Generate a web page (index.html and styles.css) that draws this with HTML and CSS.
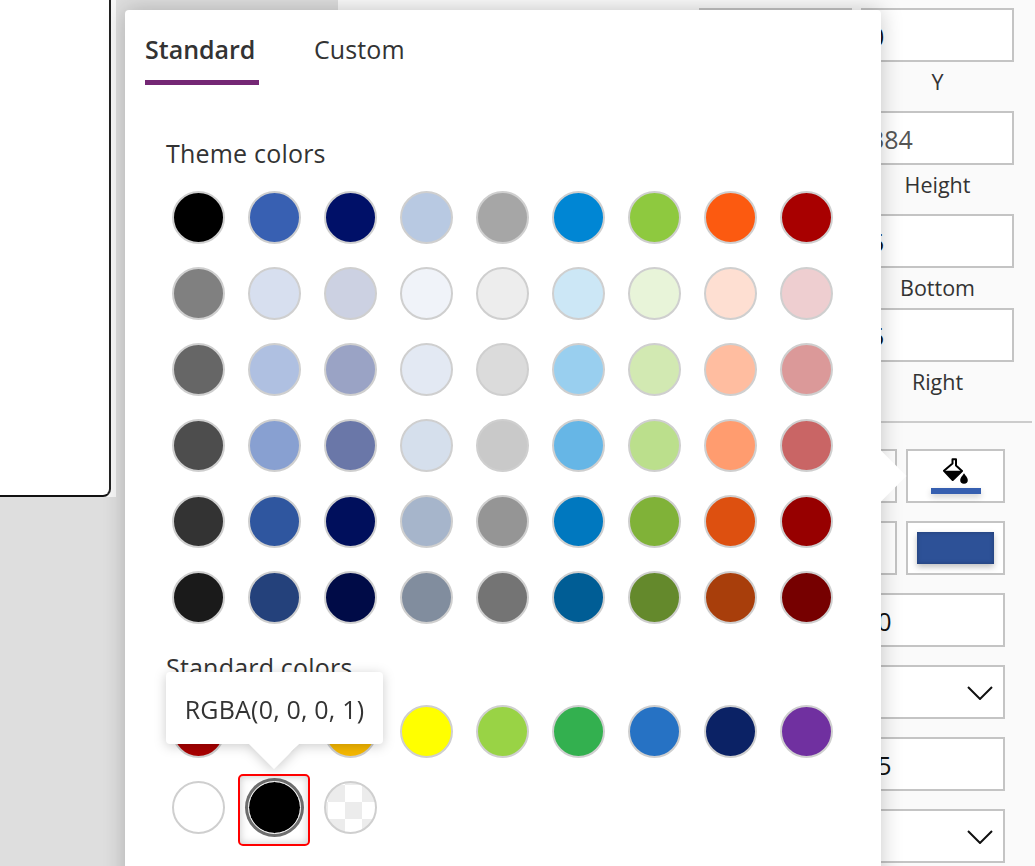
FILE: index.html
```html
<!DOCTYPE html>
<html lang="en">
<head>
    <meta charset="UTF-8">
    <meta name="viewport" content="width=device-width, initial-scale=1.0">
    <title>Color picker</title>
    <link rel="stylesheet" href="styles.css">
</head>
<body>
    <div class="canvas">
        <div class="slide-edge">
            <div class="slide"></div>
        </div>
    </div>

    <div class="pane">
        <div class="pos-row">
            <div class="prop"><div class="field">0</div><div class="prop-label">X</div></div>
            <div class="prop"><div class="field">0</div><div class="prop-label">Y</div></div>
        </div>
        <div class="pos-row">
            <div class="prop"><div class="field muted">1366</div><div class="prop-label">Width</div></div>
            <div class="prop"><div class="field muted">384</div><div class="prop-label">Height</div></div>
        </div>
        <div class="pos-row tight">
            <div class="prop"><div class="field">5</div><div class="prop-label">Top</div></div>
            <div class="prop"><div class="field">5</div><div class="prop-label">Bottom</div></div>
        </div>
        <div class="pos-row tight">
            <div class="prop"><div class="field">5</div><div class="prop-label">Left</div></div>
            <div class="prop"><div class="field">5</div><div class="prop-label">Right</div></div>
        </div>
        <div class="divider"></div>

        <div class="style-rows">
            <div class="btn-row">
                <div class="field"></div>
                <div class="field icon-btn">
                    <svg class="bucket" viewBox="0 0 26 26" width="26" height="26">
                        <path d="M9.500 1.200h3.500v6.300l6 5.500-9.300 9-8.700-9.300 8.500-7.200z" fill="#fff" stroke="#000" stroke-width="2" stroke-linejoin="round"/>
                        <path d="M1.500 12.800h18l-9.700 9.700z" fill="#000"/>
                        <path d="M21 15.300c1.800 2.700 3.800 4.700 3.800 6.700a3.800 3.800 0 0 1-7.600 0c0-2 2-4 3.800-6.700z" fill="#000"/>
                    </svg>
                    <span class="fill-bar"></span>
                </div>
            </div>
            <div class="btn-row">
                <div class="field"></div>
                <div class="field icon-btn"><span class="fill-swatch"></span></div>
            </div>
            <div class="field">10</div>
            <div class="field select">
                <svg class="chevron" viewBox="0 0 26 14" width="26" height="14"><path d="M1 1l12 12L25 1" fill="none" stroke="#111" stroke-width="2"/></svg>
            </div>
            <div class="field">15</div>
            <div class="field select">
                <svg class="chevron" viewBox="0 0 26 14" width="26" height="14"><path d="M1 1l12 12L25 1" fill="none" stroke="#111" stroke-width="2"/></svg>
            </div>
        </div>
    </div>

    <div class="popup">
        <div class="tabs">
            <div class="tab active">Standard</div>
            <div class="tab">Custom</div>
        </div>

        <div class="group-title first">Theme colors</div>
        <div class="swatches">
            <div class="swatch" style="background-color: #000000"></div>
            <div class="swatch" style="background-color: #3860b2"></div>
            <div class="swatch" style="background-color: #001068"></div>
            <div class="swatch" style="background-color: #b8c9e2"></div>
            <div class="swatch" style="background-color: #a6a6a6"></div>
            <div class="swatch" style="background-color: #0086d4"></div>
            <div class="swatch" style="background-color: #8ec93f"></div>
            <div class="swatch" style="background-color: #fc5a10"></div>
            <div class="swatch" style="background-color: #a80000"></div>

            <div class="swatch" style="background-color: #808080"></div>
            <div class="swatch" style="background-color: #d7dfef"></div>
            <div class="swatch" style="background-color: #ccd1e2"></div>
            <div class="swatch" style="background-color: #f0f3f9"></div>
            <div class="swatch" style="background-color: #ededed"></div>
            <div class="swatch" style="background-color: #cce7f6"></div>
            <div class="swatch" style="background-color: #e8f4d9"></div>
            <div class="swatch" style="background-color: #fedfd2"></div>
            <div class="swatch" style="background-color: #eeced0"></div>

            <div class="swatch" style="background-color: #666666"></div>
            <div class="swatch" style="background-color: #afc0e1"></div>
            <div class="swatch" style="background-color: #9aa3c5"></div>
            <div class="swatch" style="background-color: #e3e9f3"></div>
            <div class="swatch" style="background-color: #dbdbdb"></div>
            <div class="swatch" style="background-color: #99cfef"></div>
            <div class="swatch" style="background-color: #d2e9b2"></div>
            <div class="swatch" style="background-color: #ffbda0"></div>
            <div class="swatch" style="background-color: #db9999"></div>

            <div class="swatch" style="background-color: #4d4d4d"></div>
            <div class="swatch" style="background-color: #88a0d1"></div>
            <div class="swatch" style="background-color: #6a77a8"></div>
            <div class="swatch" style="background-color: #d5dfec"></div>
            <div class="swatch" style="background-color: #c9c9c9"></div>
            <div class="swatch" style="background-color: #66b6e6"></div>
            <div class="swatch" style="background-color: #bbdf8c"></div>
            <div class="swatch" style="background-color: #ff9c6f"></div>
            <div class="swatch" style="background-color: #c96565"></div>

            <div class="swatch" style="background-color: #333333"></div>
            <div class="swatch" style="background-color: #2f569f"></div>
            <div class="swatch" style="background-color: #000f5c"></div>
            <div class="swatch" style="background-color: #a6b5cb"></div>
            <div class="swatch" style="background-color: #959595"></div>
            <div class="swatch" style="background-color: #0078bf"></div>
            <div class="swatch" style="background-color: #80b238"></div>
            <div class="swatch" style="background-color: #dd5010"></div>
            <div class="swatch" style="background-color: #970000"></div>

            <div class="swatch" style="background-color: #1a1a1a"></div>
            <div class="swatch" style="background-color: #24417b"></div>
            <div class="swatch" style="background-color: #000b47"></div>
            <div class="swatch" style="background-color: #818d9e"></div>
            <div class="swatch" style="background-color: #747474"></div>
            <div class="swatch" style="background-color: #005d95"></div>
            <div class="swatch" style="background-color: #64892c"></div>
            <div class="swatch" style="background-color: #a83e0b"></div>
            <div class="swatch" style="background-color: #760000"></div>
        </div>

        <div class="group-title">Standard colors</div>
        <div class="swatches">
            <div class="swatch" style="background-color: #a80000"></div>
            <div class="swatch" style="background-color: #e3400c"></div>
            <div class="swatch" style="background-color: #f6b800"></div>
            <div class="swatch" style="background-color: #ffff00"></div>
            <div class="swatch" style="background-color: #99d345"></div>
            <div class="swatch" style="background-color: #33b04f"></div>
            <div class="swatch" style="background-color: #2672c4"></div>
            <div class="swatch" style="background-color: #0b2265"></div>
            <div class="swatch" style="background-color: #7030a0"></div>

            <div class="swatch" style="background-color: #ffffff"></div>
            <div class="swatch selected"></div>
            <div class="swatch checker"></div>
        </div>

        <div class="tooltip">RGBA(0, 0, 0, 1)</div>
    </div>
</body>
</html>
```

FILE: styles.css
```css
*, *::before, *::after {
    box-sizing: border-box;
}

body {
    margin: 0;
    height: 866px;
    overflow: hidden;
    display: flex;
    position: relative;
    font-family: "Open Sans", "Noto Sans", sans-serif;
    color: #333;
}

/* left side */
.canvas {
    width: 338px;
    height: 100%;
    background-color: #dedede;
}

.slide-edge {
    width: 116px;
    height: 497px;
    background-color: #f7f7f7;
}

.slide {
    width: 111px;
    height: 497px;
    background-color: #fff;
    border-right: 2px solid #222;
    border-bottom: 2px solid #111;
    border-bottom-right-radius: 8px;
}

/* right side */
.pane {
    flex: 1;
    height: 100%;
    padding-top: 8px;
    background-color: #fafafa;
}

.pos-row {
    display: grid;
    grid-template-columns: 153px 153px;
    column-gap: 9px;
    margin-left: 361px;
    margin-bottom: 9px;
}

.pos-row.tight {
    margin-bottom: 0;
}

.prop-label {
    height: 40px;
    line-height: 40px;
    text-align: center;
    font-size: 21.5px;
}

.field {
    height: 54px;
    line-height: 52px;
    padding-left: 7px;
    background-color: #fff;
    border: 2px solid #c4c4c4;
    font-size: 25px;
    color: #111;
}

.field.muted {
    color: #555;
}

.divider {
    height: 2px;
    margin: 19px 3px 26px 0;
    background-color: #ccc;
}

.style-rows {
    display: flex;
    flex-direction: column;
    gap: 18px;
    margin-left: 516px;
    width: 151px;
}

.btn-row {
    display: grid;
    grid-template-columns: 43px 99px;
    column-gap: 9px;
}

.icon-btn {
    padding: 0;
    display: flex;
    flex-direction: column;
    align-items: center;
}

.bucket {
    margin-top: 7px;
}

.fill-bar {
    width: 50px;
    height: 6px;
    margin-top: 4px;
    background-color: #365fb0;
    box-shadow: 0 3px 6px rgba(0, 0, 0, 0.2);
}

.fill-swatch {
    width: 77px;
    height: 32px;
    margin-top: 9px;
    background-color: #2d5197;
    box-shadow: 0 3px 6px rgba(0, 0, 0, 0.25), inset 0 0 4px rgba(0, 0, 0, 0.25);
}

.select {
    display: flex;
    justify-content: flex-end;
    align-items: center;
    padding-right: 10px;
}

.chevron {
    margin-top: 2px;
}

/* popup */
.popup {
    position: absolute;
    left: 125px;
    top: 10px;
    width: 756px;
    height: 880px;
    background-color: #fff;
    border-radius: 4px;
    box-shadow: 0 0 22px rgba(0, 0, 0, 0.22);
}

.popup::after {
    content: "";
    position: absolute;
    left: 738px;
    top: 448px;
    width: 36px;
    height: 36px;
    background-color: #fff;
    transform: rotate(45deg);
}

.tabs {
    display: flex;
    gap: 55px;
    height: 75px;
    padding-left: 20px;
}

.tab {
    height: 75px;
    line-height: 78px;
    font-size: 25px;
    letter-spacing: 0.1px;
}

.tab.active {
    width: 114px;
    font-weight: 600;
    letter-spacing: 0;
    border-bottom: 5px solid #742774;
}

.group-title {
    height: 32px;
    line-height: 32px;
    margin: 27px 0 22px 41px;
    font-size: 25px;
    letter-spacing: 0.2px;
}

.group-title.first {
    margin-top: 52px;
}

.swatches {
    display: grid;
    grid-template-columns: repeat(9, 53px);
    gap: 23px;
    padding-left: 47px;
}

.swatch {
    width: 53px;
    height: 53px;
    border: 2px solid #cfcfcf;
    border-radius: 50%;
    background-clip: border-box;
}

.swatch.selected {
    position: relative;
    background-color: #000;
    background-clip: padding-box;
    border: 1px solid #fff;
    box-shadow: 0 0 0 3px #6e6e6e;
}

.swatch.selected::after {
    content: "";
    position: absolute;
    left: -11px;
    top: -8px;
    width: 72px;
    height: 72px;
    border: 2px solid #f00;
    border-radius: 5px;
    box-shadow: inset 0 0 8px rgba(0, 0, 0, 0.22);
}

.swatch.checker {
    background-color: #fff;
    background-image: conic-gradient(#ececec 25%, #fff 0 50%, #ececec 0 75%, #fff 0);
    background-size: 34px 34px;
    background-position: 2px 19px;
}

.tooltip {
    position: absolute;
    left: 41px;
    top: 662px;
    width: 217px;
    height: 72px;
    line-height: 74px;
    text-align: center;
    font-size: 25px;
    letter-spacing: 0.2px;
    background-color: #fff;
    border-radius: 4px;
    filter: drop-shadow(0 2px 6px rgba(0, 0, 0, 0.2));
}

.tooltip::after {
    content: "";
    position: absolute;
    left: 90px;
    top: 54px;
    width: 36px;
    height: 36px;
    background-color: #fff;
    transform: rotate(45deg);
    clip-path: polygon(100% 0, 100% 100%, 0 100%);
}
```
